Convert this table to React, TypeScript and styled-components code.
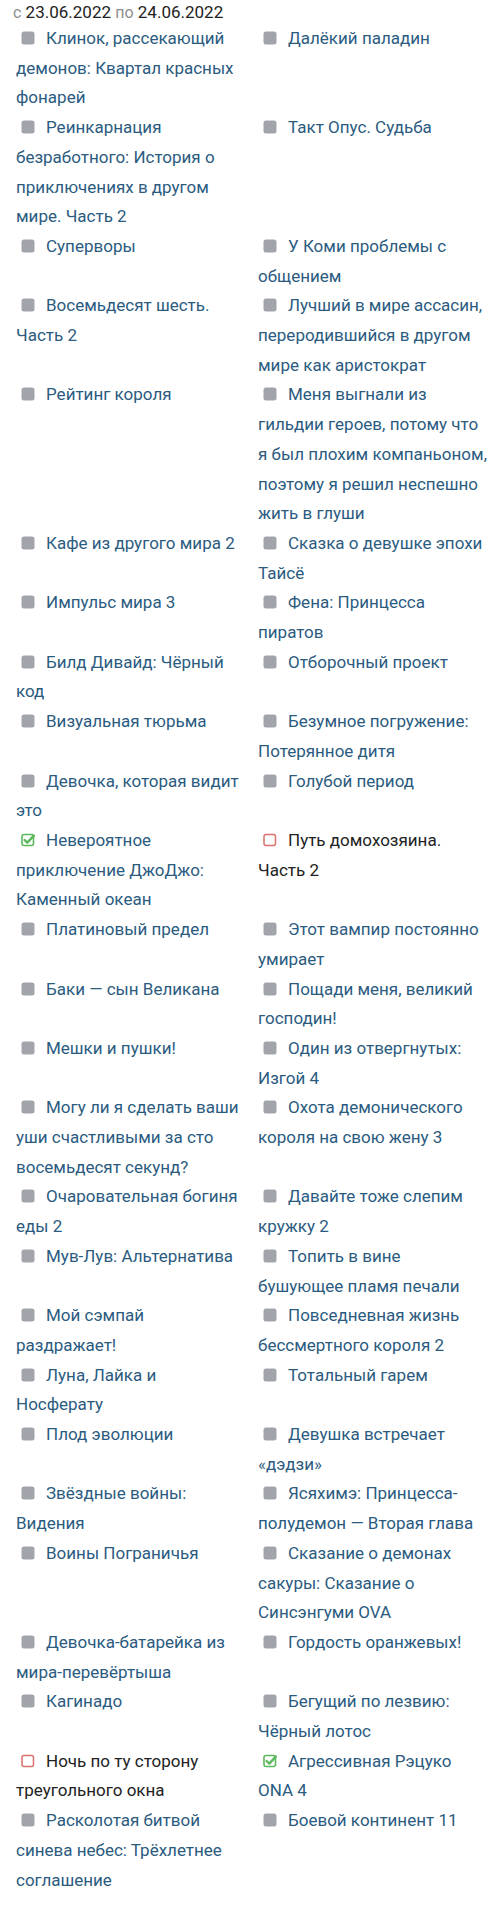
import React from 'react';
import styled, {createGlobalStyle} from "styled-components";

type StatusType = "none" | "done" | "dropped"

type ItemType = {
    title: string
    status?: StatusType
}

const rows: [ItemType, ItemType][] = [
    [{title: "Клинок, рассекающий демонов: Квартал красных фонарей"}, {title: "Далёкий паладин"}],
    [{title: "Реинкарнация безработного: История о приключениях в другом мире. Часть 2"}, {title: "Такт Опус. Судьба"}],
    [{title: "Суперворы"}, {title: "У Коми проблемы с общением"}],
    [{title: "Восемьдесят шесть. Часть 2"}, {title: "Лучший в мире ассасин, переродившийся в другом мире как аристократ"}],
    [{title: "Рейтинг короля"}, {title: "Меня выгнали из гильдии героев, потому что я был плохим компаньоном, поэтому я решил неспешно жить в глуши"}],
    [{title: "Кафе из другого мира 2"}, {title: "Сказка о девушке эпохи Тайсё"}],
    [{title: "Импульс мира 3"}, {title: "Фена: Принцесса пиратов"}],
    [{title: "Билд Дивайд: Чёрный код"}, {title: "Отборочный проект"}],
    [{title: "Визуальная тюрьма"}, {title: "Безумное погружение: Потерянное дитя"}],
    [{title: "Девочка, которая видит это"}, {title: "Голубой период"}],
    [{title: "Невероятное приключение ДжоДжо: Каменный океан", status: "done"}, {title: "Путь домохозяина. Часть 2", status: "dropped"}],
    [{title: "Платиновый предел"}, {title: "Этот вампир постоянно умирает"}],
    [{title: "Баки — сын Великана"}, {title: "Пощади меня, великий господин!"}],
    [{title: "Мешки и пушки!"}, {title: "Один из отвергнутых: Изгой 4"}],
    [{title: "Могу ли я сделать ваши уши счастливыми за сто восемьдесят секунд?"}, {title: "Охота демонического короля на свою жену 3"}],
    [{title: "Очаровательная богиня еды 2"}, {title: "Давайте тоже слепим кружку 2"}],
    [{title: "Мув-Лув: Альтернатива"}, {title: "Топить в вине бушующее пламя печали"}],
    [{title: "Мой сэмпай раздражает!"}, {title: "Повседневная жизнь бессмертного короля 2"}],
    [{title: "Луна, Лайка и Носферату"}, {title: "Тотальный гарем"}],
    [{title: "Плод эволюции"}, {title: "Девушка встречает «дэдзи»"}],
    [{title: "Звёздные войны: Видения"}, {title: "Ясяхимэ: Принцесса-полудемон — Вторая глава"}],
    [{title: "Воины Пограничья"}, {title: "Сказание о демонах сакуры: Сказание о Синсэнгуми OVA"}],
    [{title: "Девочка-батарейка из мира-перевёртыша"}, {title: "Гордость оранжевых!"}],
    [{title: "Кагинадо"}, {title: "Бегущий по лезвию: Чёрный лотос"}],
    [{title: "Ночь по ту сторону треугольного окна", status: "dropped"}, {title: "Агрессивная Рэцуко ONA 4", status: "done"}],
    [{title: "Расколотая битвой синева небес: Трёхлетнее соглашение"}, {title: "Боевой континент 11"}],
]

const StatusIcon = ({status}: { status: StatusType }) => {
    if (status === "done") {
        return (
            <IconBox>
                <svg width="15" height="14" viewBox="0 0 15 14">
                    <rect x="1" y="1.5" width="11.5" height="11" rx="2" fill="none" stroke="#5cb85c" strokeWidth="1.6"/>
                    <path d="M3.6 7 L6.3 9.6 L12.8 2.6" fill="none" stroke="#5cb85c" strokeWidth="2.4"
                          strokeLinecap="round" strokeLinejoin="round"/>
                </svg>
            </IconBox>
        )
    }
    if (status === "dropped") {
        return (
            <IconBox>
                <svg width="15" height="14" viewBox="0 0 15 14">
                    <rect x="1" y="1.5" width="11.5" height="11" rx="2" fill="none" stroke="#d9706c" strokeWidth="1.5"/>
                </svg>
            </IconBox>
        )
    }
    return (
        <IconBox>
            <svg width="15" height="14" viewBox="0 0 15 14">
                <rect x="0.5" y="0.5" width="13" height="13" rx="2.5" fill="#a1a5ab"/>
            </svg>
        </IconBox>
    )
}

export default function App() {
    return (
        <>
            <GlobalStyle/>
            <Page>
                <Period>
                    <Muted>с</Muted> <DateText>23.06.2022</DateText> <Muted>по</Muted> <DateText>24.06.2022</DateText>
                </Period>
                <List>
                    {rows.flat().map((item, i) => (
                        <Item key={i} dropped={item.status === "dropped"}>
                            <StatusIcon status={item.status ?? "none"}/>
                            {item.title}
                        </Item>
                    ))}
                </List>
            </Page>
        </>
    );
}

const GlobalStyle = createGlobalStyle`
    body {
        margin: 0;
        background: #fff;
        font-family: Roboto, "Noto Sans", sans-serif;
    }
`

const Page = styled.div`
    width: 496px;
    padding: 0 6px 0 16px;
    box-sizing: border-box;
`

const Period = styled.div`
    height: 24px;
    line-height: 24px;
    font-size: 17px;
    margin-left: -3px;
`

const Muted = styled.span`
    color: #8e8e8e;
    font-size: 16px;
`

const DateText = styled.span`
    color: #222;
`

const List = styled.div`
    display: grid;
    grid-template-columns: 229px 232px;
    column-gap: 13px;
`

const Item = styled.div<{ dropped?: boolean }>`
    font-size: 17px;
    line-height: 29.7px;
    color: ${props => props.dropped ? "#222" : "#2b5b7f"};
`

const IconBox = styled.span`
    display: inline-block;
    width: 15px;
    height: 14px;
    margin: 0 10px 0 5px;
    vertical-align: -1px;

    svg {
        display: block;
    }
`
